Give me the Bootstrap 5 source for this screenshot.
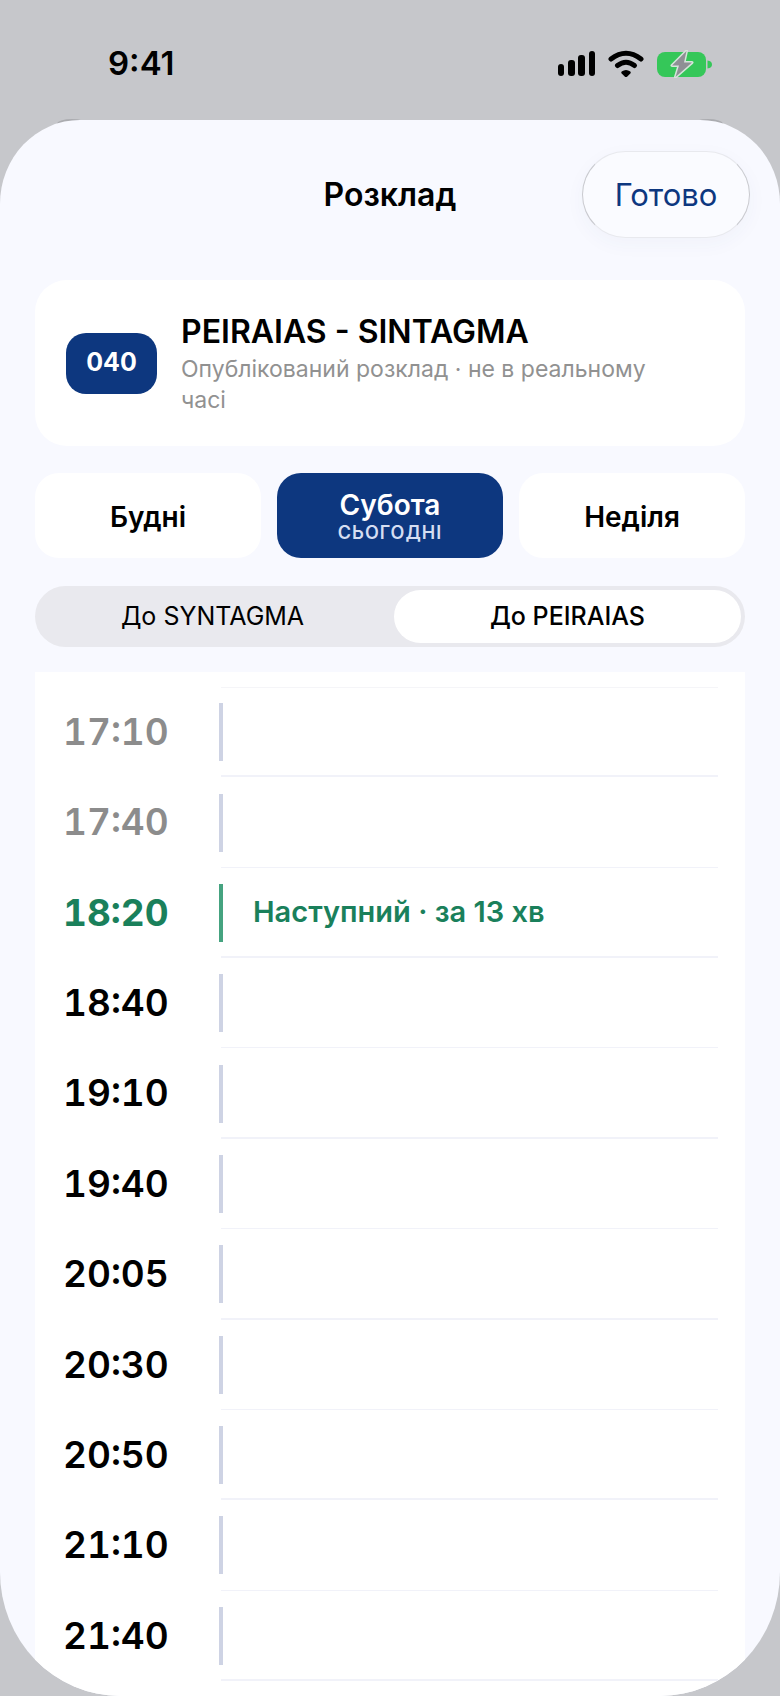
<!DOCTYPE html>
<html lang="uk">
<head>
<meta charset="utf-8">
<meta name="viewport" content="width=device-width, initial-scale=1">
<title>Розклад</title>
<link href="https://cdn.jsdelivr.net/npm/bootstrap@5.3.0/dist/css/bootstrap.min.css" rel="stylesheet">
<style>
  :root { --navy: #0d377f; --green: #1a805b; --mist: #f8f9ff; --backdrop: #c6c7cb; }
  body { background: var(--backdrop); color: #000; font-family: Inter, "Liberation Sans", sans-serif; line-height: 1.25; }
  .status-bar { height: 120px; padding: 8px 68px 0 108px; }
  .clock { font-size: 33px; font-weight: 600; }
  .sheet { background: var(--mist); border-radius: 80px 80px 120px 120px / 84px 84px 124px 124px; }
  .sheet-clip { overflow: hidden; border-radius: inherit; }
  .sheet-behind { top: -1px; left: 0; right: 0; z-index: -1; padding: 0 57px; }
  .sheet-behind span { width: 30px; height: 10px; background: #abacb0; border-radius: 50%; }
  .sheet-head { display: grid; grid-template-columns: 1fr auto 1fr; height: 160px; padding: 30px 30px 42px; }
  .sheet-title { grid-column: 2; font-size: 32px; font-weight: 600; padding-top: 2px; }
  .done-btn { height: 87px; width: 168px; border-radius: 44px; font-size: 31px; color: var(--navy); background: #fafbff;
    border: 1px solid; border-color: #e8e9ee #c9cacf; box-shadow: 0 6px 20px rgba(60, 70, 120, .04); padding: 2px 0 0; }
  .sheet-body { padding: 0 35px; }
  .route-card { background: #fff; border-radius: 32px; padding: 30px 60px 30px 31px; gap: 24px; }
  .route-no { background: var(--navy); color: #fff; border-radius: 20px; width: 91px; height: 61px; font-size: 25px; font-weight: 700; }
  .route-name { font-size: 32px; font-weight: 600; line-height: 44px; }
  .route-note { font-size: 23px; line-height: 31px; color: #919191; }
  .days { gap: 16px; margin-top: 27px; }
  .day-btn { flex: 1 1 0; height: 85px; border: 0; border-radius: 24px; background: #fff; color: #000; font-size: 28px; font-weight: 600; line-height: 32px; padding: 2px 0 0; }
  .day-btn.on { background: var(--navy); color: #fff; }
  .day-note { font-size: 18px; font-weight: 600; line-height: 24px; color: #d5def2; letter-spacing: 1px; text-transform: uppercase; }
  .segments { margin-top: 28px; height: 61px; border-radius: 31px; background: #e9e9ee; padding: 4px; gap: 8px; }
  .seg-btn { flex: 1 1 0; border: 0; border-radius: 27px; background: transparent; color: #000; font-size: 25px; padding: 0; }
  .seg-btn.on { background: #fff; font-weight: 500; }
  .times { margin-top: 25px; background: #fff; padding: 15px 27px 15px 28px; }
  .trip { min-height: 90px; }
  .trip-time { width: 156px; font-size: 37px; font-weight: 600; font-variant-numeric: tabular-nums; }
  .trip-mark { width: 4px; height: 58px; background: #ced3e4; }
  .trip-rest { border-bottom: 2px solid #f1f2f9; margin-left: -2px; padding-left: 32px; font-size: 29px; font-weight: 600; }
  .trip:nth-child(even) .trip-rest { border-bottom-width: 1px; }
  .trip.first .trip-rest { border-top: 1px solid #f5f5f8; }
  .gone .trip-time { color: #8c8c8c; }
  .upcoming { color: var(--green); }
  .upcoming .trip-time { font-weight: 700; }
  .upcoming .trip-mark { background: #45a380; }
</style>
</head>
<body>
<div class="d-flex flex-column min-vh-100">
  <header class="status-bar d-flex align-items-center justify-content-between">
    <span class="clock">9:41</span>
    <div class="d-flex align-items-center">
      <svg width="154" height="28" viewBox="0 0 154 28" role="img" aria-label="Сигнал, Wi-Fi, заряджання">
        <g>
          <rect x="0" y="14" width="6" height="12" rx="3"/><rect x="10" y="10" width="7" height="16" rx="3"/>
          <rect x="20" y="5" width="7" height="21" rx="3"/><rect x="31" y="1" width="6" height="25" rx="3"/>
        </g>
        <g fill="none" stroke="#000" stroke-width="5" stroke-linecap="round">
          <path d="M53 9Q68 -2.500 83 9"/><path d="M59.500 15.500Q68 9 76.500 15.500"/>
        </g>
        <path d="M63.700 21.500Q68 18.300 72.300 21.500Q73.300 22.500 72.300 23.500L69.300 26.400Q68 27.400 66.700 26.400L63.700 23.500Q62.700 22.500 63.700 21.500Z"/>
        <rect x="99" y="2" width="49" height="25" rx="8" fill="#35c759"/>
        <path d="M149.500 10.500Q154 11 154 14.500T149.500 18.500Z" fill="#35c759"/>
        <path d="M128.500 1L114 15.500H121L117.500 27L134 12.500H126Z" fill="#8f9095" stroke="#d5e5da" stroke-width="3" stroke-linejoin="round" paint-order="stroke"/>
      </svg>
    </div>
  </header>

  <main class="sheet position-relative flex-grow-1 d-flex flex-column">
    <div class="sheet-behind position-absolute d-flex justify-content-between" aria-hidden="true"><span></span><span></span></div>
    <div class="sheet-clip flex-grow-1 d-flex flex-column">
      <div class="sheet-head align-items-center">
        <h1 class="sheet-title m-0">Розклад</h1>
        <button type="button" class="btn done-btn ms-auto">Готово</button>
      </div>
      <div class="sheet-body flex-grow-1 d-flex flex-column">
        <section class="route-card d-flex align-items-center">
          <span class="route-no d-flex align-items-center justify-content-center flex-shrink-0">040</span>
          <div>
            <h2 class="route-name m-0">PEIRAIAS - SINTAGMA</h2>
            <p class="route-note m-0">Опублікований розклад · не в реальному часі</p>
          </div>
        </section>

        <div class="days d-flex" role="group" aria-label="День">
          <button type="button" class="day-btn">Будні</button>
          <button type="button" class="day-btn on" aria-pressed="true">Субота<span class="day-note d-block">сьогодні</span></button>
          <button type="button" class="day-btn">Неділя</button>
        </div>

        <div class="segments d-flex" role="group" aria-label="Напрямок">
          <button type="button" class="seg-btn">До SYNTAGMA</button>
          <button type="button" class="seg-btn on" aria-pressed="true">До PEIRAIAS</button>
        </div>

        <ul class="times list-unstyled mb-0 flex-grow-1 d-flex flex-column">
          <li class="trip first gone flex-fill d-flex align-items-center"><time class="trip-time">17:10</time><span class="trip-mark"></span><div class="trip-rest flex-grow-1 align-self-stretch"></div></li>
          <li class="trip gone flex-fill d-flex align-items-center"><time class="trip-time">17:40</time><span class="trip-mark"></span><div class="trip-rest flex-grow-1 align-self-stretch"></div></li>
          <li class="trip upcoming flex-fill d-flex align-items-center"><time class="trip-time">18:20</time><span class="trip-mark"></span><div class="trip-rest flex-grow-1 align-self-stretch d-flex align-items-center">Наступний · за 13 хв</div></li>
          <li class="trip flex-fill d-flex align-items-center"><time class="trip-time">18:40</time><span class="trip-mark"></span><div class="trip-rest flex-grow-1 align-self-stretch"></div></li>
          <li class="trip flex-fill d-flex align-items-center"><time class="trip-time">19:10</time><span class="trip-mark"></span><div class="trip-rest flex-grow-1 align-self-stretch"></div></li>
          <li class="trip flex-fill d-flex align-items-center"><time class="trip-time">19:40</time><span class="trip-mark"></span><div class="trip-rest flex-grow-1 align-self-stretch"></div></li>
          <li class="trip flex-fill d-flex align-items-center"><time class="trip-time">20:05</time><span class="trip-mark"></span><div class="trip-rest flex-grow-1 align-self-stretch"></div></li>
          <li class="trip flex-fill d-flex align-items-center"><time class="trip-time">20:30</time><span class="trip-mark"></span><div class="trip-rest flex-grow-1 align-self-stretch"></div></li>
          <li class="trip flex-fill d-flex align-items-center"><time class="trip-time">20:50</time><span class="trip-mark"></span><div class="trip-rest flex-grow-1 align-self-stretch"></div></li>
          <li class="trip flex-fill d-flex align-items-center"><time class="trip-time">21:10</time><span class="trip-mark"></span><div class="trip-rest flex-grow-1 align-self-stretch"></div></li>
          <li class="trip flex-fill d-flex align-items-center"><time class="trip-time">21:40</time><span class="trip-mark"></span><div class="trip-rest flex-grow-1 align-self-stretch"></div></li>
        </ul>
      </div>
    </div>
  </main>
</div>
<script src="https://cdn.jsdelivr.net/npm/bootstrap@5.3.0/dist/js/bootstrap.bundle.min.js"></script>
</body>
</html>
